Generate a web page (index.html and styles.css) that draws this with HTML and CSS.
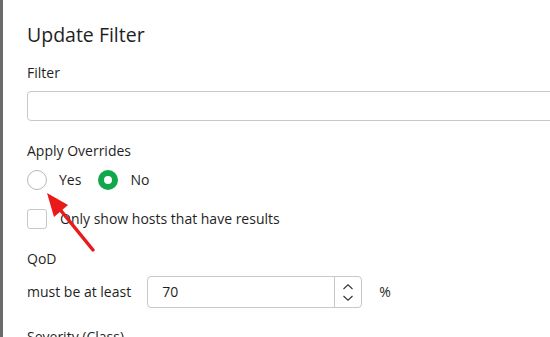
FILE: index.html
```html
<!DOCTYPE html>
<html lang="en">
<head>
    <meta charset="UTF-8">
    <meta name="viewport" content="width=device-width, initial-scale=1.0">
    <title>Update Filter</title>
    <link rel="stylesheet" href="styles.css">
</head>
<body>
    <!-- Dimmed page behind the dialog -->
    <div class="backdrop"></div>

    <!-- Dialog -->
    <div class="dialog">
        <h1 class="dialog-title">Update Filter</h1>

        <label class="field-label">Filter</label>
        <input class="text-input" type="text">

        <label class="field-label overrides-label">Apply Overrides</label>
        <div class="radio-row">
            <span class="radio"></span>
            <span class="radio-text">Yes</span>
            <span class="radio radio-checked"></span>
            <span class="radio-text">No</span>
        </div>

        <div class="check-row">
            <span class="checkbox"></span>
            <span>Only show hosts that have results</span>
        </div>

        <label class="field-label qod-label">QoD</label>
        <div class="qod-row">
            <span>must be at least</span>
            <div class="spinner">
                <span class="spinner-value">70</span>
                <span class="spinner-buttons">
                    <svg width="12" height="8" viewBox="0 0 12 8"><path d="M1.5 6 L6 1.8 L10.5 6" fill="none" stroke="#333" stroke-width="1.1"/></svg>
                    <svg width="12" height="8" viewBox="0 0 12 8"><path d="M1.5 2 L6 6.2 L10.5 2" fill="none" stroke="#333" stroke-width="1.1"/></svg>
                </span>
            </div>
            <span class="unit">%</span>
        </div>

        <label class="field-label severity-label">Severity (Class)</label>
    </div>

    <!-- Annotation arrow -->
    <svg class="arrow" width="550" height="337" viewBox="0 0 550 337">
        <line x1="93" y1="250" x2="58" y2="207" stroke="#ea1a1a" stroke-width="3.5" stroke-linecap="round"/>
        <polygon points="47,193 68,205 54,217" fill="#ea1a1a"/>
    </svg>
</body>
</html>
```

FILE: styles.css
```css
/* Page reset */
body {
    margin: 0;
    height: 337px;
    overflow: hidden;
    display: flex;
    font-family: "Open Sans", "DejaVu Sans", sans-serif;
    font-size: 14px;
    line-height: 20px;
    color: #1f1f1f;
    background-color: #fff;
}

/* Grey strip of the page behind */
.backdrop {
    width: 3px;
    flex-shrink: 0;
    background-color: #6b6b6b;
}

/* Dialog body */
.dialog {
    flex: 1;
    padding: 23px 0 0 24px;
    display: flex;
    flex-direction: column;
    align-items: flex-start;
    min-width: 0;
}

.dialog > * {
    flex-shrink: 0;
}

.dialog-title {
    margin: 0 0 16px;
    font-size: 19.5px;
    line-height: 24px;
    font-weight: normal;
}

.field-label {
    display: block;
}

.text-input {
    box-sizing: border-box;
    width: 600px;
    height: 30px;
    margin-top: 8px;
    border: 1px solid #c8c8c8;
    border-radius: 4px;
    font: inherit;
}

.overrides-label {
    margin-top: 20px;
}

/* Radio buttons */
.radio-row {
    display: flex;
    align-items: center;
    height: 20px;
    margin-top: 9px;
}

.radio {
    box-sizing: border-box;
    width: 20px;
    height: 20px;
    border: 1px solid #b9b9b9;
    border-radius: 50%;
}

.radio-checked {
    border: 6px solid #11a84c;
    background-color: #fff;
}

.radio-text {
    margin-left: 12px;
    margin-right: 17px;
}

/* Checkbox */
.check-row {
    display: flex;
    align-items: center;
    gap: 13px;
    margin-top: 19px;
}

.checkbox {
    box-sizing: border-box;
    width: 20px;
    height: 20px;
    border: 1px solid #c8c8c8;
    border-radius: 3px;
}

.qod-label {
    margin-top: 20px;
}

/* QoD number field */
.qod-row {
    display: flex;
    align-items: center;
    margin-top: 7px;
}

.spinner {
    box-sizing: border-box;
    display: flex;
    width: 215px;
    height: 32px;
    margin-left: 16px;
    border: 1px solid #c8c8c8;
    border-radius: 4px;
}

.spinner-value {
    flex: 1;
    padding-left: 14px;
    line-height: 30px;
}

.spinner-buttons {
    width: 26px;
    border-left: 1px solid #c8c8c8;
    display: flex;
    flex-direction: column;
    align-items: center;
    justify-content: center;
    gap: 3px;
}

.spinner-buttons svg {
    display: block;
}

.unit {
    margin-left: 17px;
}

.severity-label {
    margin-top: 19px;
}

/* Red annotation arrow over the form */
.arrow {
    position: absolute;
    left: 0;
    top: 0;
    pointer-events: none;
}
```
